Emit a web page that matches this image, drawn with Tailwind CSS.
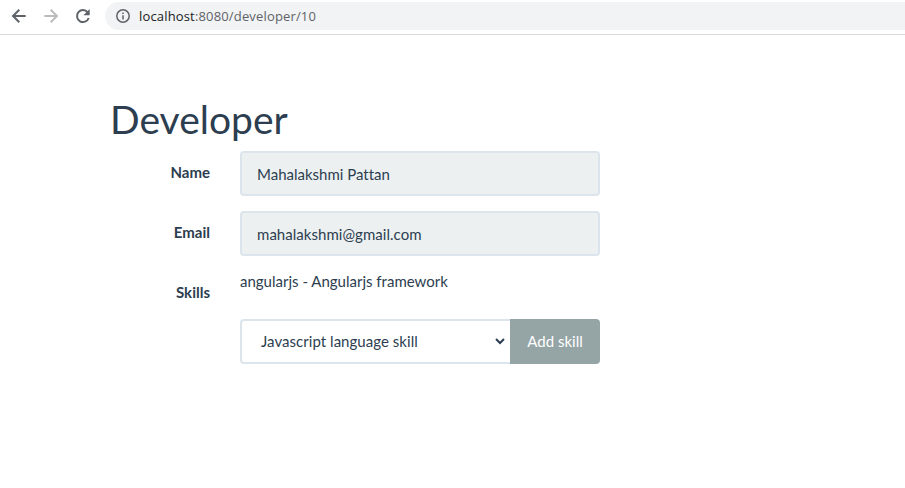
<!DOCTYPE html>
<html lang="en"><head><meta charset="utf-8"><title>Developer</title>
<script src="https://cdn.jsdelivr.net/npm/@tailwindcss/browser@4"></script></head>
<body class="bg-white font-['Lato',sans-serif] text-[15px] leading-[21px] text-[#2c3e50] [font-variant-ligatures:none]">
<header class="flex h-[35px] border-b border-[#dadce0] pt-[2px] pl-[11px] text-[#5f6368]">
<svg class="mt-[6px] h-4 w-4" viewBox="0 0 16 16" fill="none" stroke="#5f6368" stroke-width="2"><path d="M14.7 8H2.5M8.3 1.7 2 8l6.300 6.300"/></svg>
<svg class="mt-[6px] ml-4 h-4 w-4" viewBox="0 0 16 16" fill="none" stroke="#babcbe" stroke-width="2"><path d="M1.300 8H13.500M7.700 1.700 14 8l-6.300 6.300"/></svg>
<svg class="mt-[6px] ml-4 h-4 w-4" viewBox="0 0 16 16" fill="none" stroke="#5f6368" stroke-width="2"><path d="M12.700 4.300A6 6 0 1 0 13.700 10"/><path d="M14.700 1v6.300H8.400z" fill="#5f6368" stroke="none"/></svg>
<div class="ml-[14px] flex h-7 grow items-center rounded-l-full bg-[#f1f3f4] pl-[11px]">
<svg class="h-[14px] w-[14px]" viewBox="0 0 14 14" fill="none" stroke="#5f6368" stroke-width="1.5"><circle cx="7" cy="7" r="6.200"/><path d="M7 6.200v4.300M7 3.400v1.500"/></svg>
<p class="ml-[9px] font-['Open_Sans',sans-serif] text-[13px] tracking-[0.16px]"><span class="text-[#202124]">localhost</span>:8080/developer/10</p>
</div></header>
<main class="ml-[110px] w-[490px] pt-[63px]">
<h1 class="h-[53px] text-[39px] leading-[43px]">Developer</h1>
<div class="grid grid-cols-[100px_360px] gap-x-[30px]">
<label class="pt-[11px] text-right font-bold">Name</label>
<div class="mb-[15px] h-[45px] rounded border-2 border-[#dce4ec] bg-[#ecf0f1] px-[15px] pt-[11px]">Mahalakshmi Pattan</div>
<label class="pt-[11px] text-right font-bold">Email</label>
<div class="mb-[15px] h-[45px] rounded border-2 border-[#dce4ec] bg-[#ecf0f1] px-[15px] pt-[11px] tracking-[0.04px]">mahalakshmi@gmail.com</div>
<label class="pt-[11px] text-right font-bold">Skills</label>
<div><p class="h-12">angularjs - Angularjs framework</p>
<div class="flex h-[45px]">
<div class="flex w-[270px] items-center justify-between rounded-l border-2 border-r-0 border-[#dce4ec] pr-[5px] pl-[19px] tracking-[0.04px]">Javascript language skill
<svg class="h-[7px] w-[10px]" viewBox="0 0 10 7" fill="none" stroke="#2c3e50" stroke-width="2"><path d="m1 1 4 4 4-4"/></svg></div>
<button class="w-[90px] rounded-r bg-[#95a5a6] text-white">Add skill</button>
</div></div></div></main></body></html>
